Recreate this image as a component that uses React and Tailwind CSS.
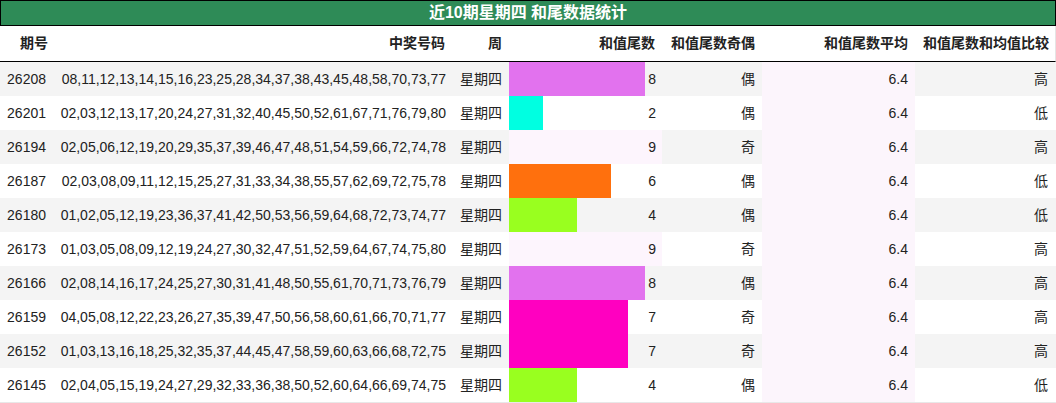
import React from 'react'

const rows = [
    ['26208', '08,11,12,13,14,15,16,23,25,28,34,37,38,43,45,48,58,70,73,77', 8, '偶', '高', '#e272ee'],
    ['26201', '02,03,12,13,17,20,24,27,31,32,40,45,50,52,61,67,71,76,79,80', 2, '偶', '低', '#00ffe1'],
    ['26194', '02,05,06,12,19,20,29,35,37,39,46,47,48,51,54,59,66,72,74,78', 9, '奇', '高', '#fdf5fd'],
    ['26187', '02,03,08,09,11,12,15,25,27,31,33,34,38,55,57,62,69,72,75,78', 6, '偶', '低', '#ff700d'],
    ['26180', '01,02,05,12,19,23,36,37,41,42,50,53,56,59,64,68,72,73,74,77', 4, '偶', '低', '#99ff1f'],
    ['26173', '01,03,05,08,09,12,19,24,27,30,32,47,51,52,59,64,67,74,75,80', 9, '奇', '高', '#fdf5fd'],
    ['26166', '02,08,14,16,17,24,25,27,30,31,41,48,50,55,61,70,71,73,76,79', 8, '偶', '高', '#e272ee'],
    ['26159', '04,05,08,12,22,23,26,27,35,39,47,50,56,58,60,61,66,70,71,77', 7, '奇', '高', '#ff00c0'],
    ['26152', '01,03,13,16,18,25,32,35,37,44,45,47,58,59,60,63,66,68,72,75', 7, '奇', '高', '#ff00c0'],
    ['26145', '02,04,05,15,19,24,27,29,32,33,36,38,50,52,60,64,66,69,74,75', 4, '偶', '低', '#99ff1f'],
]

const cols = 'grid grid-cols-[55px_397px_57px_153px_100px_153px_141px]'
const headers = ['期号', '中奖号码', '周', '和值尾数', '和值尾数奇偶', '和值尾数平均', '和值尾数和均值比较']

export default function App() {
    return (
        <div
            className="w-[1056px] h-[403px] bg-white text-[14px] text-[#222]"
            style={{ fontFamily: '"Liberation Sans", "Noto Sans CJK SC", sans-serif' }}
        >
            {/* titre */}
            <div className="h-[26px] bg-[#2e8b57] border border-black flex items-center justify-center text-white font-bold text-[16px]">
                近10期星期四 和尾数据统计
            </div>

            {/* en-tête */}
            <div className={`${cols} h-[36px] border-b border-black border-r border-r-[#e5e5e5] font-bold`}>
                {headers.map((h) => (
                    <div key={h} className="flex items-center justify-end pr-[7px] whitespace-nowrap">
                        {h}
                    </div>
                ))}
            </div>

            {/* lignes */}
            <div className="border-b border-[#e8e8e8]">
                {rows.map(([id, nums, tail, parity, cmp, color], i) => (
                    <div
                        key={id}
                        className={`${cols} h-[34px] ${i % 2 === 0 ? 'bg-[#f4f4f4]' : 'bg-white'}`}
                    >
                        <div className="flex items-center justify-end pr-[9px]">{id}</div>
                        <div className="flex items-center justify-end pr-[6px] whitespace-nowrap">{nums}</div>
                        <div className="flex items-center justify-end pr-[7px]">星期四</div>
                        <div className="relative flex items-center justify-end pr-[6px]">
                            <div
                                className="absolute left-0 top-0 h-full"
                                style={{ width: tail * 17, backgroundColor: color }}
                            />
                            <span className="relative">{tail}</span>
                        </div>
                        <div className="flex items-center justify-end pr-[7px]">{parity}</div>
                        <div className="flex items-center justify-end pr-[7px] bg-[#fcf5fc]">6.4</div>
                        <div className="flex items-center justify-end pr-[8px]">{cmp}</div>
                    </div>
                ))}
            </div>
        </div>
    )
}
